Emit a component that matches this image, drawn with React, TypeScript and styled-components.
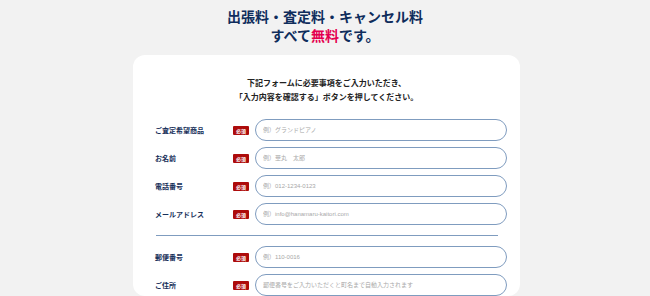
import styled, { createGlobalStyle } from "styled-components";

const GlobalStyle = createGlobalStyle`
  html, body {
    margin: 0;
    padding: 0;
    background: #f2f2f2;
    font-family: "Noto Sans CJK JP", "Noto Sans", sans-serif;
  }
`;

const Page = styled.div`
  width: 650px;
  height: 296px;
  overflow: hidden;
  display: flex;
  flex-direction: column;
  align-items: center;
  padding: 7px 0 0 3px;
  box-sizing: border-box;
`;

const Headline = styled.h1`
  margin: 0 0 0 -3px;
  font-size: 14px;
  font-weight: 700;
  color: #0f2d5c;
  text-align: center;
`;

const HeadLine = styled.span`
  display: block;
  height: 19px;
  line-height: 19px;
`;

const Free = styled.span`
  color: #e4004f;
`;

const Card = styled.section`
  margin-top: 10px;
  width: 387px;
  background: #fff;
  border-radius: 12px;
  padding: 21px 13px 0 22px;
  box-sizing: border-box;
  flex: 1;
`;

const Intro = styled.p`
  margin: 0 0 15px;
  padding-right: 9px;
  font-size: 8px;
  line-height: 14px;
  font-weight: 700;
  color: #222;
  text-align: center;
`;

const Fields = styled.div`
  display: flex;
  flex-direction: column;
  gap: 6px;
`;

const Row = styled.div`
  display: grid;
  grid-template-columns: 72px 16px 1fr;
  column-gap: 6px;
  align-items: center;
  height: 22px;
`;

const Label = styled.label`
  font-size: 7px;
  font-weight: 700;
  color: #17305a;
  white-space: nowrap;
`;

const Required = styled.span`
  display: flex;
  align-items: center;
  justify-content: center;
  width: 16px;
  height: 9px;
  border-radius: 1px;
  background: #ad0b0b;
  color: #fff;
  font-size: 5px;
  font-weight: 700;
  line-height: 1;
`;

const Input = styled.input`
  box-sizing: border-box;
  width: 100%;
  height: 22px;
  border: 1px solid #7f9cbf;
  border-radius: 11px;
  padding: 0 7px;
  background: #fff;
  font-family: "Liberation Sans", "Noto Sans CJK JP", sans-serif;
  font-size: 6px;
  color: #333;
  outline: none;

  &::placeholder {
    color: #a8a8a8;
  }
`;

const Divider = styled.hr`
  margin: 4px 9px 4px 1px;
  border: none;
  border-top: 1px solid #7f9cbf;
`;

const upper = [
  { id: "item", label: "ご査定希望商品", placeholder: "例）グランドピアノ" },
  { id: "name", label: "お名前", placeholder: "例）華丸　太郎" },
  { id: "tel", label: "電話番号", placeholder: "例）012-1234-0123" },
  { id: "mail", label: "メールアドレス", placeholder: "例）info@hanamaru-kaitori.com" },
];

const lower = [
  { id: "zip", label: "郵便番号", placeholder: "例）110-0016" },
  { id: "addr", label: "ご住所", placeholder: "郵便番号をご入力いただくと町名まで自動入力されます" },
];

function Field({ id, label, placeholder }: { id: string; label: string; placeholder: string }) {
  return (
    <Row>
      <Label htmlFor={id}>{label}</Label>
      <Required>必須</Required>
      <Input id={id} placeholder={placeholder} />
    </Row>
  );
}

export default function App() {
  return (
    <>
      <GlobalStyle />
      <Page>
        <Headline>
          <HeadLine>出張料・査定料・キャンセル料</HeadLine>
          <HeadLine>
            すべて<Free>無料</Free>です。
          </HeadLine>
        </Headline>
        <Card>
          <Intro>
            下記フォームに必要事項をご入力いただき、
            <br />
            「入力内容を確認する」ボタンを押してください。
          </Intro>
          <Fields>
            {upper.map(f => (
              <Field key={f.id} {...f} />
            ))}
            <Divider />
            {lower.map(f => (
              <Field key={f.id} {...f} />
            ))}
          </Fields>
        </Card>
      </Page>
    </>
  );
}
